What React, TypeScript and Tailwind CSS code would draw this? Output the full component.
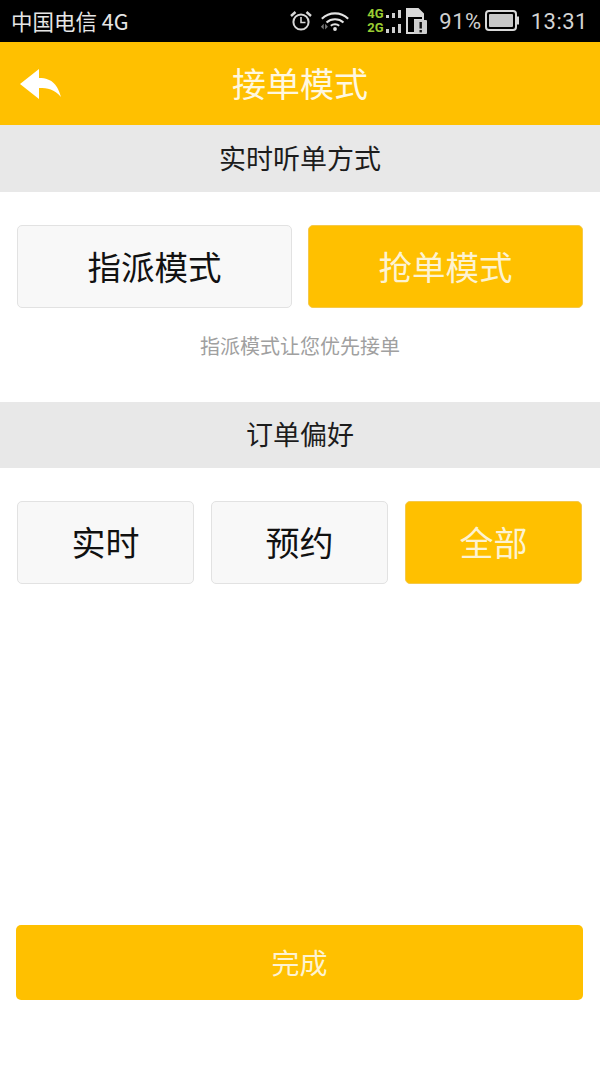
const FONT = "font-['Noto_Sans_CJK_SC','Noto_Sans',sans-serif]";

function StatusIcons() {
  return (
    <div className="flex items-center font-['Roboto','Noto_Sans',sans-serif]">
      <svg width="24" height="24" viewBox="0 0 24 24" fill="none" stroke="#d8d8d8" className="mr-[6px]">
        <circle cx="12" cy="13" r="7.6" strokeWidth="2" />
        <path d="M12 8V13.500H16.500" strokeWidth="1.600" />
        <path d="M2 7 6.500 3M22 7 17.500 3" strokeWidth="2.400" />
      </svg>
      <svg width="32" height="24" viewBox="0 0 34 24" fill="none" stroke="#e4e4e4" className="mr-[16px]">
        <path d="M3 9.500C11 2 23 2 31 9.500" strokeWidth="2.200" />
        <path d="M8 13.500C13 9 21 9 26 13.500" strokeWidth="2.200" />
        <path d="M12.500 17C15 15 19 15 21.500 17" strokeWidth="2" />
        <circle cx="17" cy="20.500" r="2" fill="#e4e4e4" stroke="none" />
        <path d="M2 18 5 15V21ZM6.500 15 9.500 18 6.500 21Z" fill="#777" stroke="none" />
      </svg>
      <div className="relative mr-[1px] h-[28px] w-[37px]">
        <span className="absolute left-0 top-0 text-[13px] font-bold leading-[14px] text-[#9acd32]">4G</span>
        <span className="absolute left-0 top-[14px] text-[13px] font-bold leading-[14px] text-[#9acd32]">2G</span>
        <svg width="37" height="28" viewBox="0 0 37 28" fill="#cfcfcf" className="absolute left-0 top-0">
          <path d="M19 8h3v3h-3zM25 6h3v5h-3zM31 3h3v8h-3zM19 22h3v4h-3zM25 20h3v6h-3zM31 17h3v9h-3z" />
        </svg>
      </div>
      <svg width="22" height="28" viewBox="0 0 22 28" className="mr-[12px]">
        <path d="M2 2h11l5 5v6h-8v13H2z" fill="none" stroke="#d8d8d8" strokeWidth="2" />
        <path d="M2 2h11l5 5v3H2z" fill="#d8d8d8" />
        <rect x="9" y="13" width="13" height="14" rx="1" fill="#cfcfcf" />
        <rect x="14.500" y="15" width="2.400" height="6.500" fill="#111" />
        <rect x="14.500" y="23" width="2.400" height="2.400" fill="#111" />
      </svg>
      <span className="mr-[3px] pt-[2px] text-[22px] leading-[24px] tracking-[0.5px] text-[#d0d0d0]">91%</span>
      <svg width="35" height="24" viewBox="0 0 35 24" className="mr-[11px]">
        <rect x="1" y="2" width="30" height="19" rx="3" fill="none" stroke="#d8d8d8" strokeWidth="2" />
        <rect x="4" y="5" width="24" height="13" rx="1" fill="#c8c8c8" />
        <rect x="32" y="7.500" width="2" height="8" fill="#d8d8d8" />
      </svg>
      <span className="pt-[2px] text-[22px] leading-[24px] tracking-[0.5px] text-[#d4d4d4]">13:31</span>
    </div>
  );
}

function SectionHeader({ title, className }: { title: string; className: string }) {
  return (
    <div className={`flex items-center justify-center bg-[#e8e8e8] text-[27px] leading-none text-[#1c1c1c] ${className}`}>
      {title}
    </div>
  );
}

function Choice({ label, active, className }: { label: string; active?: boolean; className: string }) {
  return (
    <div
      className={
        active
          ? `flex flex-1 items-center justify-center rounded-[5px] border border-[#f5c94a] bg-[#ffc000] pb-[2px] leading-none text-[#fdf3d2] ${className}`
          : `flex flex-1 items-center justify-center rounded-[5px] border border-[#e2e2e2] bg-[#f8f8f8] pb-[2px] leading-none text-[#111111] ${className}`
      }
    >
      {label}
    </div>
  );
}

export default function App() {
  return (
    <div className={`flex h-[1067px] w-[600px] flex-col overflow-hidden bg-white ${FONT}`}>
      <div className="flex h-[42px] items-center justify-between bg-black pl-[11px] pr-[12px]">
        <span className="text-[21.500px] leading-none text-[#e6e6e6]">中国电信 4G</span>
        <StatusIcons />
      </div>

      <div className="relative flex h-[83px] items-center justify-center bg-[#ffc000] pb-[2px] text-[34px] leading-none text-[#fff8e0]">
        <svg width="44" height="32" viewBox="0 0 44 32" fill="white" className="absolute left-[19px] top-[26px]">
          <path d="M1 16 20 1V10C34 10 39 18 42 29 35 21 29 20 20 20V31Z" />
        </svg>
        接单模式
      </div>

      <SectionHeader title="实时听单方式" className="h-[67px] pb-[2px]" />

      <div className="mt-[33px] flex h-[83px] gap-[16px] px-[17px]">
        <Choice label="指派模式" className="text-[33.500px]" />
        <Choice label="抢单模式" active className="text-[33.500px]" />
      </div>

      <div className="mt-[24px] pb-[2px] text-center text-[20px] leading-[27px] text-[#a0a0a0]">指派模式让您优先接单</div>

      <SectionHeader title="订单偏好" className="mt-[41px] h-[66px] pb-[3px]" />

      <div className="mt-[33px] flex h-[83px] gap-[17px] pl-[17px] pr-[18px]">
        <Choice label="实时" className="text-[34px]" />
        <Choice label="预约" className="text-[34px]" />
        <Choice label="全部" active className="text-[34px]" />
      </div>

      <div className="ml-[16px] mr-[17px] mt-[341px] flex h-[75px] items-center justify-center rounded-[5px] bg-[#ffc000] pb-[2px] text-[28px] leading-none text-[#fdf3d2]">
        完成
      </div>
    </div>
  );
}
